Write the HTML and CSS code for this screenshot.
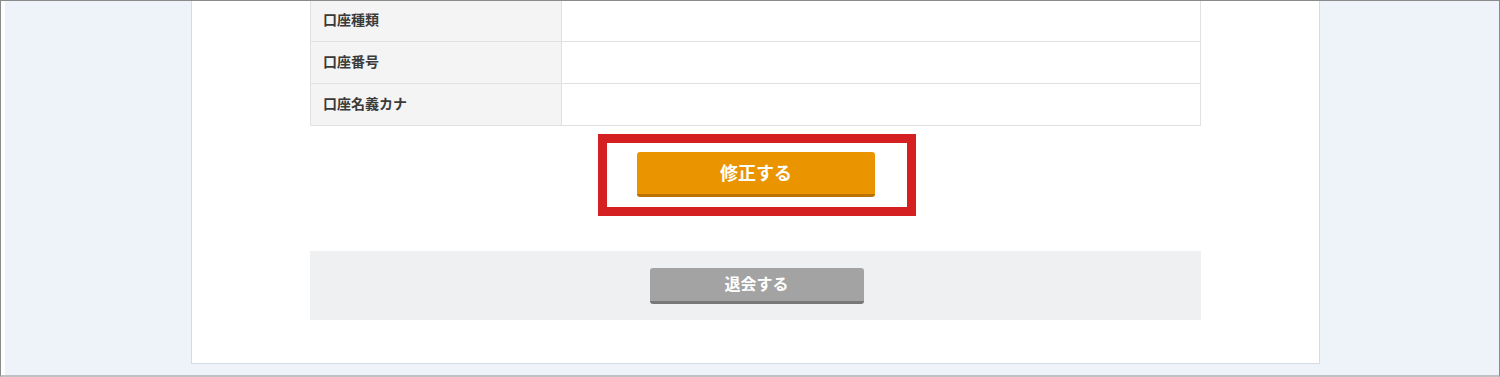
FILE: index.html
```html
<!DOCTYPE html>
<html lang="ja">
<head>
<meta charset="utf-8">
<title>会員情報</title>
<link rel="stylesheet" href="styles.css">
</head>
<body>
<div class="frame">
  <div class="bg">
    <div class="card">
      <table class="info">
        <tr><th>口座種類</th><td></td></tr>
        <tr><th>口座番号</th><td></td></tr>
        <tr><th>口座名義カナ</th><td></td></tr>
      </table>
      <div class="edit-row">
        <div class="highlight">
          <button class="btn btn-edit">修正する</button>
        </div>
      </div>
      <div class="withdraw">
        <button class="btn btn-withdraw">退会する</button>
      </div>
    </div>
  </div>
</div>
</body>
</html>
```
FILE: styles.css
```css
html, body {
  margin: 0;
  padding: 0;
  background: #ffffff;
}
body {
  font-family: "Noto Sans CJK JP", "Noto Sans", sans-serif;
  color: #333;
}
.frame {
  box-sizing: border-box;
  width: 1500px;
  height: 377px;
  border-top: 1px solid #8a8a8a;
  border-left: 1px solid #8a8a8a;
  border-right: 1px solid #8a8a8a;
  border-bottom: 2px solid #bfc1c4;
  padding-left: 4px;
  display: flex;
  background: #ffffff;
}
.bg {
  flex: 1;
  background: #eef2f9;
  overflow: hidden;
}
.card {
  box-sizing: border-box;
  margin-left: 186px;
  width: 1129px;
  height: 363px;
  background: #ffffff;
  border-left: 1px solid #d5dce5;
  border-right: 1px solid #d5dce5;
  border-bottom: 1px solid #d5dce5;
  display: flex;
  flex-direction: column;
  align-items: center;
}
.info {
  width: 891px;
  margin-top: -2px;
  border-collapse: collapse;
  border: 1px solid #e1e1e1;
}
.info th, .info td {
  height: 41px;
  padding: 0;
  border-bottom: 1px solid #e1e1e1;
  box-sizing: border-box;
}
.info th {
  width: 251px;
  background: #f4f4f4;
  border-right: 1px solid #e1e1e1;
  text-align: left;
  vertical-align: middle;
  padding-left: 12px;
  padding-bottom: 4px;
  font-size: 14px;
  font-weight: bold;
  color: #3a3a3a;
}
.info tr {
  height: 42px;
}
.edit-row {
  margin-top: 8px;
  display: flex;
  justify-content: center;
  width: 891px;
  margin-left: 3px;
}
.highlight {
  border: 9px solid #d42021;
  padding: 9px 32px 10px 30px;
  background: #fff;
}
.btn {
  display: block;
  border: none;
  border-radius: 3px;
  color: #ffffff;
  font-family: "Noto Sans CJK JP", "Noto Sans", sans-serif;
  font-weight: bold;
  cursor: pointer;
  padding: 0 0 3px 0;
}
.btn-edit {
  width: 238px;
  height: 45px;
  background: #ea9400;
  border-bottom: 3px solid #b87300;
  font-size: 18px;
}
.withdraw {
  margin-top: 35px;
  width: 891px;
  height: 69px;
  background: #eff0f2;
  display: flex;
  justify-content: center;
  align-items: flex-start;
  padding-top: 17px;
  box-sizing: border-box;
}
.btn-withdraw {
  width: 214px;
  height: 36px;
  margin-left: 2px;
  background: #a3a3a3;
  border-bottom: 3px solid #787878;
  font-size: 16px;
}
```
